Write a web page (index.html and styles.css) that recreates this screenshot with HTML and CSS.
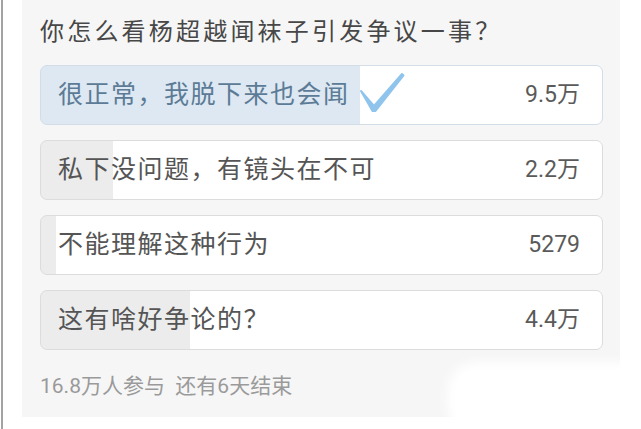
FILE: index.html
```html
<!DOCTYPE html>
<html lang="zh-CN">
<head>
<meta charset="utf-8">
<link rel="stylesheet" href="styles.css">
</head>
<body>
<div class="page">
  <div class="rule"></div>
  <div class="card">
    <h1 class="title">你怎么看杨超越闻袜子引发争议一事？</h1>
    <ul class="options">
      <li class="option chosen" style="--p: 56.8%">
        <span class="label">很正常，我脱下来也会闻</span>
        <svg class="check" width="46" height="42" viewBox="0 0 46 42" aria-hidden="true">
          <path d="M2 19 L15 34 L43 2 L44.5 3.5 L16.5 39 L13.5 39 Z" fill="#8fc4ec" stroke="#8fc4ec" stroke-width="2" stroke-linejoin="round"/>
        </svg>
        <span class="count">9.5万</span>
      </li>
      <li class="option" style="--p: 12.8%">
        <span class="label">私下没问题，有镜头在不可</span>
        <span class="count">2.2万</span>
      </li>
      <li class="option" style="--p: 2.7%">
        <span class="label">不能理解这种行为</span>
        <span class="count">5279</span>
      </li>
      <li class="option" style="--p: 26.6%">
        <span class="label">这有啥好争论的？</span>
        <span class="count">4.4万</span>
      </li>
    </ul>
    <p class="meta">16.8万人参与&nbsp; 还有6天结束</p>
    <div class="smudge"></div>
  </div>
</div>
</body>
</html>
```

FILE: styles.css
```css
* { box-sizing: border-box; }
html, body {
  margin: 0;
  padding: 0;
  background: #ffffff;
}
body {
  width: 641px;
  height: 429px;
  overflow: hidden;
  font-family: Roboto, "Noto Sans CJK SC", sans-serif;
}
.page {
  display: flex;
  height: 429px;
  padding-left: 1px;
}
.rule {
  width: 2px;
  height: 429px;
  background: #a3a3a3;
  flex: none;
}
.card {
  position: relative;
  margin-left: 19px;
  width: 598px;
  height: 417px;
  background: #f6f6f6;
  padding: 14px 17px 0 18px;
}
.title {
  margin: 0;
  font-size: 24px;
  font-weight: 400;
  line-height: 36px;
  letter-spacing: 3.2px;
  color: #474747;
}
.options {
  list-style: none;
  margin: 15px 0 0;
  padding: 0;
  display: flex;
  flex-direction: column;
  gap: 15px;
}
.option {
  --fill: #ececec;
  display: flex;
  align-items: center;
  height: 60px;
  padding: 0 22px 0 17px;
  border: 1px solid #dcdcdc;
  border-radius: 7px;
  background: linear-gradient(to right, var(--fill) var(--p), #ffffff var(--p));
  color: #555555;
}
.option.chosen {
  --fill: #dde8f2;
  border-color: #d2dde7;
  color: #5c7b96;
}
.label {
  font-size: 25px;
  line-height: 30px;
  letter-spacing: 1.5px;
}
.check {
  margin-left: 9px;
  margin-top: -4px;
  flex: none;
}
.count {
  margin-left: auto;
  font-size: 23px;
  line-height: 30px;
  color: #5a5a5a;
}
.meta {
  margin: 23px 0 0;
  font-size: 21px;
  line-height: 26px;
  color: #9a9a9a;
  letter-spacing: 0;
}
.smudge {
  position: absolute;
  left: 425px;
  top: 362px;
  width: 200px;
  height: 80px;
  background: #ffffff;
  border-radius: 30px 10px 0 40px;
  filter: blur(6px);
}
```
